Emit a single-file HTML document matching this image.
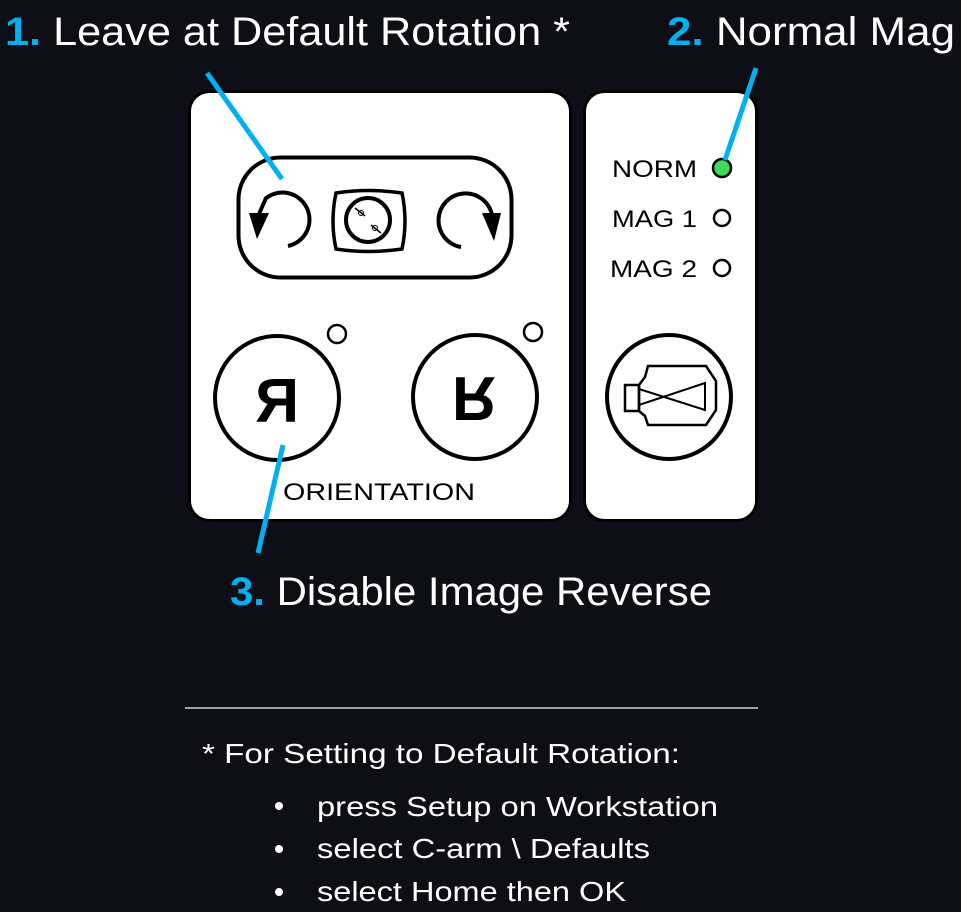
<!DOCTYPE html>
<html><head><meta charset="utf-8"><style>
html,body{margin:0;padding:0;background:#0d0e16;}
svg{display:block}
text{font-family:"Liberation Sans",sans-serif;}
</style></head><body>
<svg width="961" height="912" viewBox="0 0 961 912" xmlns="http://www.w3.org/2000/svg">
<rect width="961" height="912" fill="#0d0e16"/>
<!-- headings -->
<text x="5" y="45" font-size="40" fill="#fff" textLength="565" lengthAdjust="spacingAndGlyphs"><tspan fill="#00b0f0" font-weight="bold">1.</tspan> Leave at Default Rotation *</text>
<text x="667" y="45" font-size="40" fill="#fff" textLength="288" lengthAdjust="spacingAndGlyphs"><tspan fill="#00b0f0" font-weight="bold">2.</tspan> Normal Mag</text>
<text x="230" y="605" font-size="40" fill="#fff" textLength="482" lengthAdjust="spacingAndGlyphs"><tspan fill="#00b0f0" font-weight="bold">3.</tspan> Disable Image Reverse</text>

<!-- left panel -->
<rect x="189.5" y="91.5" width="381" height="429" rx="20" fill="#fff" stroke="#000" stroke-width="3"/>
<rect x="238.5" y="157.5" width="273" height="120" rx="42" fill="none" stroke="#000" stroke-width="4"/>
<!-- left rotate arrow -->
<path d="M265 199 A27 27 0 1 1 288 246" fill="none" stroke="#000" stroke-width="4"/>
<path d="M249 213 L269 213 L257 239 Z" fill="#000"/>
<path d="M266 198 L259 214" stroke="#000" stroke-width="4"/>
<!-- right rotate arrow -->
<path d="M461 247 A27 27 0 1 1 492 215" fill="none" stroke="#000" stroke-width="4"/>
<path d="M482 213 L501 213 L494 241 Z" fill="#000"/>
<!-- center box -->
<path d="M336 193 Q369 188 402 193 Q408 221 402 249 Q369 254 336 249 Q330 221 336 193 Z" fill="none" stroke="#000" stroke-width="3.5"/>
<circle cx="368" cy="220" r="22" fill="none" stroke="#000" stroke-width="4"/>
<path d="M355 208 L365 216 M371 225 L381 233" stroke="#000" stroke-width="1.5"/>
<circle cx="361" cy="213" r="2.5" fill="none" stroke="#000" stroke-width="1"/>
<circle cx="375" cy="228" r="2.5" fill="none" stroke="#000" stroke-width="1"/>
<!-- R buttons -->
<circle cx="277" cy="398" r="62" fill="none" stroke="#000" stroke-width="4"/>
<circle cx="337" cy="334" r="9" fill="none" stroke="#000" stroke-width="2.5"/>
<text x="277" y="422" font-size="62" font-weight="bold" text-anchor="middle" transform="translate(554 0) scale(-1 1)" fill="#000" textLength="44" lengthAdjust="spacingAndGlyphs">R</text>
<circle cx="475" cy="397" r="62" fill="none" stroke="#000" stroke-width="4"/>
<circle cx="533" cy="332" r="9" fill="none" stroke="#000" stroke-width="2.5"/>
<text x="474" y="422" font-size="62" font-weight="bold" text-anchor="middle" transform="translate(0 799) scale(1 -1)" fill="#000" textLength="44" lengthAdjust="spacingAndGlyphs">R</text>
<text x="283" y="500" font-size="24" fill="#000" textLength="192" lengthAdjust="spacingAndGlyphs">ORIENTATION</text>

<!-- right panel -->
<rect x="584.5" y="91.5" width="172" height="429" rx="20" fill="#fff" stroke="#000" stroke-width="3"/>
<text x="612" y="177" font-size="24" fill="#000" textLength="85" lengthAdjust="spacingAndGlyphs">NORM</text>
<text x="612" y="227" font-size="24" fill="#000" textLength="85" lengthAdjust="spacingAndGlyphs">MAG 1</text>
<text x="610" y="277" font-size="24" fill="#000" textLength="87" lengthAdjust="spacingAndGlyphs">MAG 2</text>
<circle cx="722" cy="168" r="9" fill="#3ddc5a" stroke="#000" stroke-width="2.5"/>
<circle cx="722" cy="218" r="8" fill="none" stroke="#000" stroke-width="2.5"/>
<circle cx="722" cy="268" r="8" fill="none" stroke="#000" stroke-width="2.5"/>
<circle cx="669" cy="397" r="62" fill="none" stroke="#000" stroke-width="4"/>
<rect x="625" y="385" width="14" height="26" fill="none" stroke="#000" stroke-width="2.5"/>
<path d="M645 377 L648 366 L706 366 L716 381 L716 410 L706 425 L648 425 L645 416 L639 411 L639 385 Z" fill="none" stroke="#000" stroke-width="2.5"/>
<path d="M639 389 L705 410 L705 383 L639 405 Z" fill="none" stroke="#000" stroke-width="2"/>

<!-- blue callout lines -->
<g stroke="#00b0f0" stroke-width="5" stroke-linecap="butt">
<line x1="207" y1="73" x2="282" y2="179"/>
<line x1="756" y1="68" x2="725" y2="160"/>
<line x1="283" y1="445" x2="258" y2="553"/>
</g>

<!-- divider -->
<line x1="185" y1="708" x2="758" y2="708" stroke="#d0d0d0" stroke-width="1.5"/>

<text x="202" y="763" font-size="28" fill="#fff" textLength="478" lengthAdjust="spacingAndGlyphs">* For Setting to Default Rotation:</text>
<g font-size="28" fill="#fff">
<circle cx="279" cy="806" r="4" fill="#fff"/>
<circle cx="279" cy="849" r="4" fill="#fff"/>
<circle cx="279" cy="892" r="4" fill="#fff"/>
<text x="317" y="816" textLength="401" lengthAdjust="spacingAndGlyphs">press Setup on Workstation</text>
<text x="317" y="858" textLength="333" lengthAdjust="spacingAndGlyphs">select C-arm \ Defaults</text>
<text x="317" y="901" textLength="309" lengthAdjust="spacingAndGlyphs">select Home then OK</text>
</g>
</svg>
</body></html>
